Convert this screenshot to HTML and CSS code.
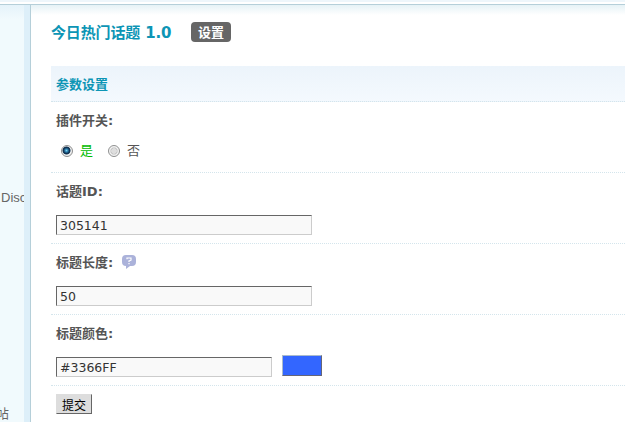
FILE: index.html
```html
<!DOCTYPE html>
<html lang="zh-CN">

<head>
    <meta charset="UTF-8">
    <title>今日热门话题 1.0</title>
    <link rel="stylesheet" href="styles.css">
</head>

<body>
    <div class="topbar"></div>
    <div class="wrap">
        <div class="menu">
            <div class="menu-disc">Disc</div>
            <div class="menu-site">帖</div>
        </div>
        <div class="main">
            <div class="title">
                <h3>今日热门话题 1.0</h3>
                <a class="tab">设置</a>
            </div>
            <form>
                <div class="head">参数设置</div>
                <div class="row">
                    <div class="label">插件开关:</div>
                    <div class="field radios">
                        <label class="on"><input type="radio" name="open" checked><span>是</span></label>
                        <label><input type="radio" name="open"><span>否</span></label>
                    </div>
                </div>
                <div class="row">
                    <div class="label">话题ID:</div>
                    <div class="field"><input class="txt" type="text" value="305141"></div>
                </div>
                <div class="row">
                    <div class="label">标题长度:
                        <svg class="tip" width="14" height="14" viewBox="0 0 14 14">
                            <path fill="#abb2da" d="M4 0h6q4 0 4 4v3q0 4-4 4H8l-4 3v-3Q0 11 0 7V4q0-4 4-4z" />
                            <path fill="none" stroke="#fff" stroke-width="1.2" d="M5 4.2V3h4v2.2L7 6v1M7 8v1.3" />
                        </svg>
                    </div>
                    <div class="field"><input class="txt" type="text" value="50"></div>
                </div>
                <div class="row">
                    <div class="label">标题颜色:</div>
                    <div class="field">
                        <input class="txt short" type="text" value="#3366FF">
                        <span class="color"></span>
                    </div>
                </div>
                <button class="btn" type="button">提交</button>
            </form>
        </div>
    </div>
</body>

</html>
```
FILE: styles.css
```css
* {
    box-sizing: border-box;
}

body {
    margin: 0;
    height: 422px;
    overflow: hidden;
    background: #fff;
    color: #555;
    font: 12px/18px "DejaVu Sans", "Noto Sans CJK SC", sans-serif;
}

.topbar {
    height: 5px;
    background: linear-gradient(#eef6fb 2px, #fff 2px);
    border-bottom: 1px solid #b5cfd9;
}

.wrap {
    display: flex;
    height: 417px;
    background: linear-gradient(#e6f2f6, #fff 10px);
}

.menu {
    width: 31px;
    padding-top: 184px;
    border-right: 1px solid #b5cfd9;
    background: linear-gradient(to right, transparent 24px, #ddeff9 24px), linear-gradient(#e5f3fa, #f1fafd 14px);
    overflow: hidden;
    color: #666;
}

.menu-disc {
    width: 24px;
    padding-left: 1px;
    overflow: hidden;
    font: 13px/18px "Liberation Sans", sans-serif;
}

.menu-site {
    margin: 198px 0 0 -4px;
    font-size: 13px;
}

.main {
    flex: 1;
    padding-left: 20px;
}

.title {
    display: flex;
    align-items: center;
    height: 61px;
    padding-bottom: 7px;
}

.title h3 {
    margin: 0;
    padding-top: 1px;
    width: 140px;
    color: #0d95b5;
    font-size: 15px;
    letter-spacing: -0.15px;
    white-space: nowrap;
}

.tab {
    width: 40px;
    height: 20px;
    border-radius: 4px;
    background: #666;
    color: #fff;
    font-size: 13px;
    font-weight: bold;
    line-height: 22px;
    text-align: center;
}

.head {
    height: 36px;
    padding-left: 5px;
    border-bottom: 1px dotted #d4e5ec;
    background: linear-gradient(#ecf4fb, #f4f9fe);
    color: #0d95b5;
    font-size: 13px;
    font-weight: bold;
    line-height: 37px;
}

.row {
    height: 71px;
    padding-left: 5px;
    border-bottom: 1px dotted #d4e5ec;
}

.label {
    display: flex;
    align-items: center;
    height: 36px;
    padding-top: 1px;
    font-size: 13px;
    font-weight: bold;
}

.tip {
    margin: -2px 0 0 9px;
}

.field {
    display: flex;
    padding-top: 5px;
}

.txt {
    width: 256px;
    height: 20px;
    margin: 1px 0 0;
    padding: 1px 3px 0;
    border: 1px solid;
    border-color: #666 #ccc #ccc #666;
    background: #f9f9f9;
    color: #333;
    font: 12.5px "DejaVu Sans", sans-serif;
}

.short {
    width: 216px;
}

.color {
    width: 40px;
    height: 21px;
    margin: -1px 0 0 10px;
    border: 1px solid;
    border-color: #abc #667 #667 #abc;
    background: #36f;
}

.radios {
    padding: 4px 0 0 5px;
}

.radios label {
    display: flex;
    align-items: center;
    width: 47px;
    height: 18px;
}

.radios span {
    font-size: 13px;
}

.radios .on {
    color: #0b0;
}

.radios input {
    appearance: none;
    width: 12px;
    height: 12px;
    margin: 0 7px 0 0;
    border: 1px solid #8e8f8f;
    border-radius: 50%;
    background: radial-gradient(#dedede 35%, #c4c4c4 42%, #f4f4f4 60%);
}

.radios input:checked {
    background: radial-gradient(circle at 45% 45%, #7fd2f0 0, #2a7fae 1.5px, #12304e 3px, #173c5c 3.6px, #eee 4.4px);
}

.btn {
    display: block;
    width: 36px;
    height: 20px;
    margin: 8px 0 0 5px;
    padding: 0;
    border: 1px solid;
    border-color: #ddd #666 #666 #ddd;
    background: #ddd;
    color: #000;
    font: 12px/20px "Noto Sans CJK SC", sans-serif;
}
```
